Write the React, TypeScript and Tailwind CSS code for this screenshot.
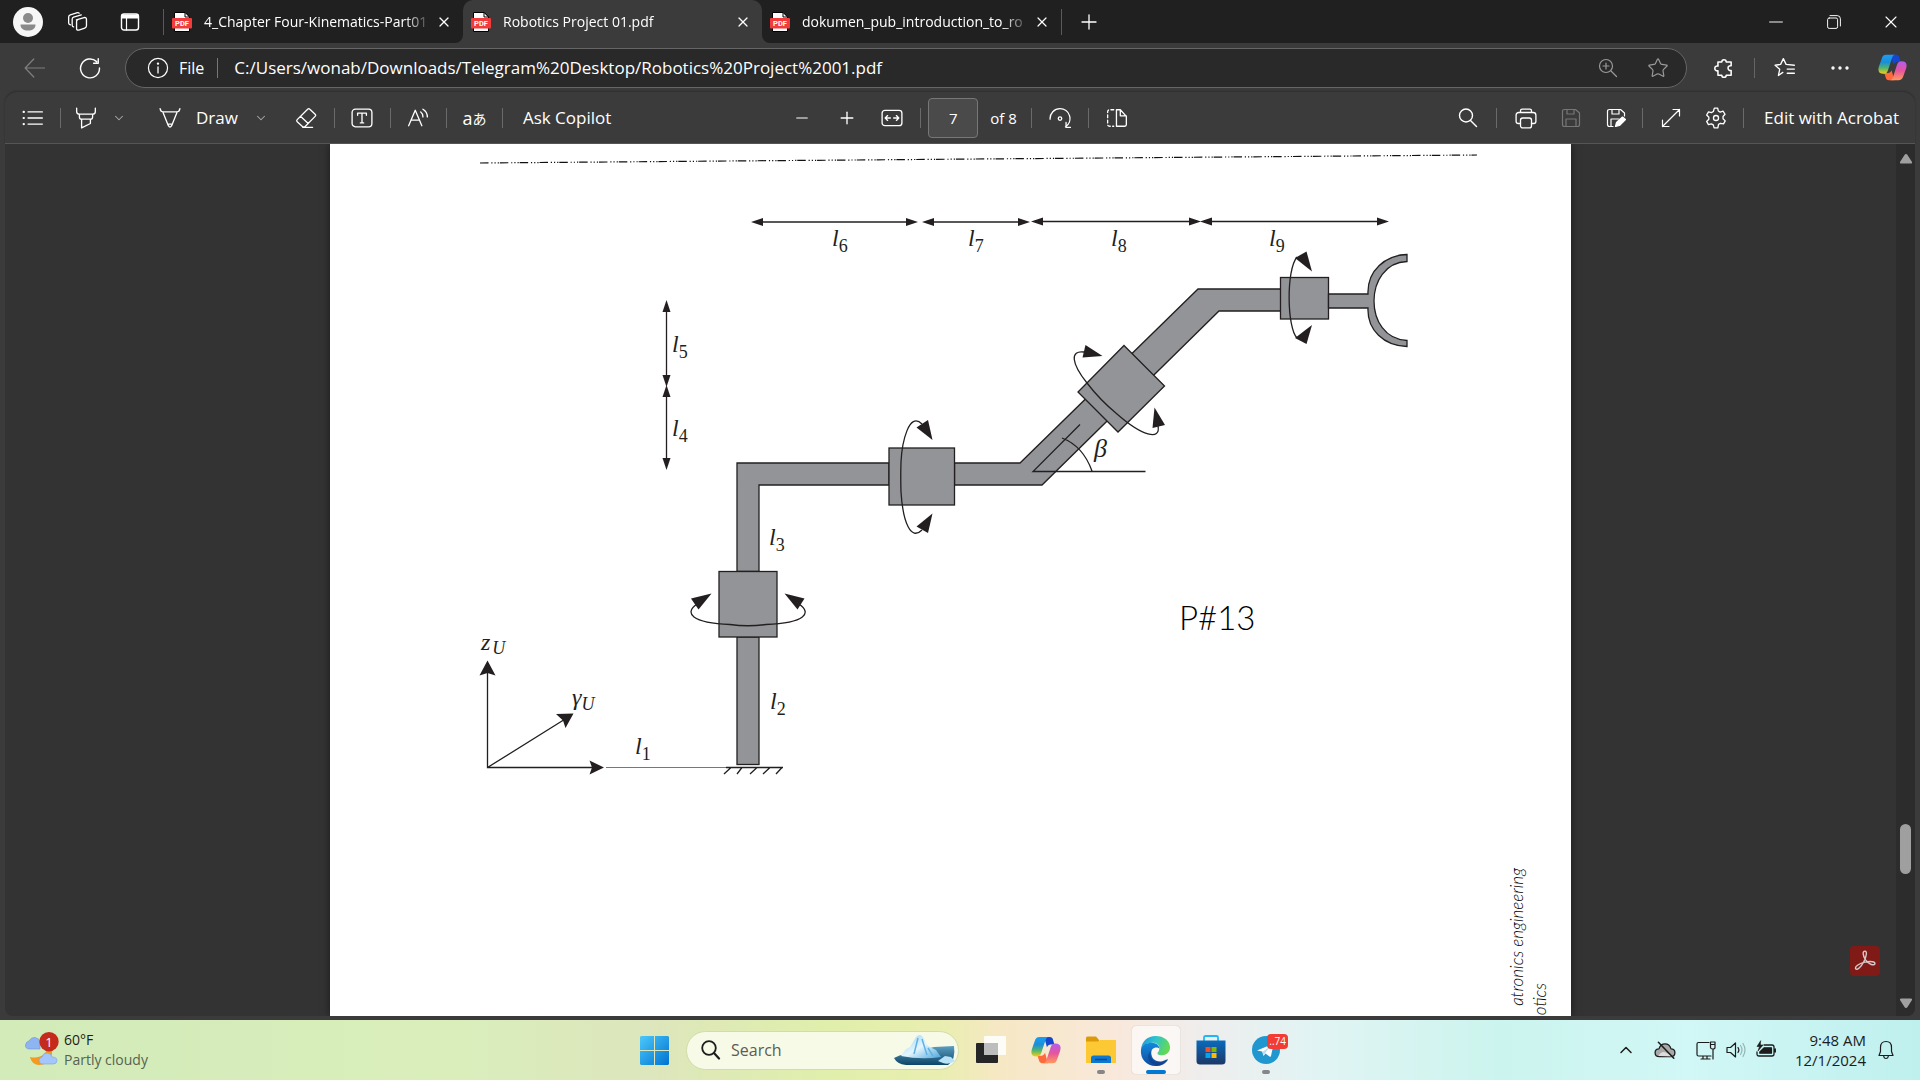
import React, { useState } from 'react';
import { ChevronDown, ChevronUp, Minus, Plus, Star, X } from 'lucide-react';

type GlyphProps = {
  className?: string;
  children: React.ReactNode;
};

function Glyph({ className = 'w-5 h-5', children }: GlyphProps) {
  return (
    <svg
      viewBox="0 0 20 20"
      className={`shrink-0 ${className}`}
      fill="none"
      stroke="currentColor"
      strokeWidth="1.2"
      strokeLinecap="round"
      strokeLinejoin="round"
      aria-hidden="true"
    >
      {children}
    </svg>
  );
}

type IconButtonProps = {
  label: string;
  className?: string;
  disabled?: boolean;
  onClick?: () => void;
  children: React.ReactNode;
};

function IconButton({ label, className = 'w-[45px]', disabled, onClick, children }: IconButtonProps) {
  return (
    <button
      type="button"
      aria-label={label}
      disabled={disabled}
      onClick={onClick}
      className={`flex h-8 shrink-0 items-center justify-center ${className}`}
    >
      {children}
    </button>
  );
}

function Divider({ className = 'h-5 bg-[#6a6a6a]' }: { className?: string }) {
  return <div className={`w-px shrink-0 ${className}`} />;
}

function PdfIcon() {
  return (
    <svg viewBox="0 0 20 20" className="h-5 w-5 shrink-0" aria-hidden="true">
      <path d="M2.500 0.500h11l4 4v15h-15z" fill="#fff" stroke="#000" />
      <path d="M13 0.500v4.500h4.500z" fill="#fff" stroke="#000" />
      <rect x="0" y="6" width="20" height="10.500" rx="1" fill="#f23b3b" />
      <text
        x="10"
        y="14"
        textAnchor="middle"
        fontSize="7.500"
        fontWeight="700"
        fill="#fff"
        fontFamily="Roboto, sans-serif"
      >
        PDF
      </text>
    </svg>
  );
}

function CopilotIcon({ id, className }: { id: string; className: string }) {
  return (
    <svg viewBox="0 0 32 32" className={className} aria-hidden="true">
      <defs>
        <linearGradient id={`${id}-a`} x1="0" y1="0" x2="0" y2="1">
          <stop offset="0" stopColor="#1a9df5" />
          <stop offset="0.400" stopColor="#1b8fd6" />
          <stop offset="0.700" stopColor="#56b56a" />
          <stop offset="1" stopColor="#f8cf12" />
        </linearGradient>
        <linearGradient id={`${id}-b`} x1="0" y1="0" x2="0" y2="1">
          <stop offset="0" stopColor="#b45cf0" />
          <stop offset="0.500" stopColor="#e6559c" />
          <stop offset="1" stopColor="#ff9a5c" />
        </linearGradient>
      </defs>
      <path d="M14 2h6c2 0 3 1 3.500 3l1.500 5h-4c-2 0-3 1-4 3z" fill="#1546d0" />
      <path d="M18 30h-6c-2 0-3-1-3.500-3L7 22h4c2 0 3-1 4-3z" fill="#ff6a3c" />
      <path
        d="M9 2h10c-2 0-3 1.500-4 5l-4 12c-.8 2.500-2 4-5 4-5 0-6.500-3-5-8l3-8.500C5 3.500 6 2 9 2z"
        fill={`url(#${id}-a)`}
      />
      <path
        d="M23 30H13c2 0 3-1.500 4-5l4-12c.8-2.500 2-4 5-4 5 0 6.500 3 5 8l-3 8.500C27 28.500 26 30 23 30z"
        fill={`url(#${id}-b)`}
      />
    </svg>
  );
}

const tabs = [
  { title: '4_Chapter Four-Kinematics-Part01', active: false },
  { title: 'Robotics Project 01.pdf', active: true },
  { title: 'dokumen_pub_introduction_to_ro', active: false },
];

function TabStrip() {
  return (
    <header className="flex h-[43px] items-center bg-[#202020] text-white">
      <button type="button" aria-label="Profile" className="ml-[13px] shrink-0">
        <svg viewBox="0 0 30 30" className="h-[30px] w-[30px]">
          <circle cx="15" cy="15" r="15" fill="#f7f7f7" />
          <circle cx="15" cy="11" r="5" fill="#8a8a8a" />
          <path d="M7.500 17.500h15c0 4-3 6-7.500 6s-7.500-2-7.500-6z" fill="#8a8a8a" />
        </svg>
      </button>
      <IconButton label="Workspaces" className="ml-3 w-[45px]">
        <Glyph className="h-[22px] w-[22px]">
          <path d="M8.500 8l7-2q2-.5 2.200 1.500v6q0 1.500-1.500 2l-5.500 1.800q-2 .5-2-1.500V9.500q0-1.200 1-1.500z" />
          <path d="M6 14.500q-1.300-.3-1.300-1.500V7.500Q4.700 6 6 5.500L13 3.500" />
          <path d="M3 12.500q-1.500-.3-1.500-1.500V5.500Q1.500 4 3 3.500l6.500-2q1-.2 1.500.5" />
        </Glyph>
      </IconButton>
      <IconButton label="Tab actions" className="ml-[7px] w-[45px]">
        <Glyph>
          <rect x="1.500" y="2" width="17" height="16" rx="2.500" strokeWidth="1.400" />
          <path d="M2 3h16v3H2z" fill="currentColor" />
          <path d="M6.500 6v12" />
        </Glyph>
      </IconButton>
      <Divider className="ml-[11px] h-[26px] bg-[#5a5a5a]" />
      <nav className="flex h-full min-w-0" aria-label="Tabs">
        {tabs.map((tab) => (
          <div
            key={tab.title}
            className={`relative flex w-[299px] min-w-0 items-center pr-[11px] pl-2 ${
              tab.active ? 'rounded-t-[10px] bg-[#3b3b3b]' : ''
            }`}
          >
            {tab.active && (
              <>
                <svg viewBox="0 0 8 8" className="absolute bottom-0 -left-2 h-2 w-2">
                  <path d="M8 0v8H0a8 8 0 0 0 8-8z" fill="#3b3b3b" />
                </svg>
                <svg viewBox="0 0 8 8" className="absolute -right-2 bottom-0 h-2 w-2">
                  <path d="M0 0v8h8a8 8 0 0 1-8-8z" fill="#3b3b3b" />
                </svg>
              </>
            )}
            <PdfIcon />
            <a
              href="#"
              className="ml-3 min-w-0 flex-1 text-sm whitespace-nowrap [mask-image:linear-gradient(to_right,black_88%,transparent)]"
            >
              {tab.title}
            </a>
            <button type="button" aria-label={`Close ${tab.title}`} className="ml-1 shrink-0">
              <X className="h-4 w-4" strokeWidth={1.8} />
            </button>
          </div>
        ))}
      </nav>
      <Divider className="h-[26px] bg-[#5a5a5a]" />
      <IconButton label="New tab" className="w-[54px]">
        <Plus className="h-6 w-6" strokeWidth={1.3} />
      </IconButton>
      <div className="ml-auto flex">
        <IconButton label="Minimize" className="w-[58px]">
          <Glyph className="h-4 w-4">
            <path d="M2 10h16" />
          </Glyph>
        </IconButton>
        <IconButton label="Restore" className="w-[57px]">
          <Glyph className="h-4 w-4">
            <rect x="2" y="5" width="12.500" height="13" rx="2" />
            <path d="M5 2h9q4 0 4 4v9" />
          </Glyph>
        </IconButton>
        <IconButton label="Close" className="w-[58px]">
          <X className="h-5 w-5" strokeWidth={1.3} />
        </IconButton>
      </div>
    </header>
  );
}

function AddressBar() {
  return (
    <div className="flex h-[49px] items-center bg-[#3b3b3b] text-white">
      <IconButton label="Back" className="ml-2 w-[54px] text-[#7f7f7f]" disabled>
        <Glyph className="h-6 w-6">
          <path d="M18 10H2M9 2.500L1.800 10 9 17.500" strokeWidth="1" />
        </Glyph>
      </IconButton>
      <IconButton label="Refresh" className="w-[55px]">
        <Glyph className="h-[22px] w-[22px]">
          <path d="M16 4.200A8.600 8.600 0 1 0 18.600 10M17.500 1.500v4.200h-4.200" strokeWidth="1.300" />
        </Glyph>
      </IconButton>
      <div className="ml-2 flex h-10 min-w-0 flex-1 items-center rounded-full border border-[#666] bg-[#292929] pr-1.5 pl-[21px]">
        <Glyph className="h-[22px] w-[22px]">
          <circle cx="10" cy="10" r="8.700" strokeWidth="1.100" />
          <path d="M10 9v5.500" />
          <circle cx="10" cy="6" r=".5" fill="currentColor" />
        </Glyph>
        <span className="ml-[10px] text-base">File</span>
        <Divider className="ml-[13px] h-5 bg-[#777]" />
        <input
          aria-label="Address"
          defaultValue="C:/Users/wonab/Downloads/Telegram%20Desktop/Robotics%20Project%2001.pdf"
          className="ml-4 min-w-0 flex-1 bg-transparent text-[17px] outline-none"
        />
        <IconButton label="Zoom" className="w-14 text-[#9a9a9a]">
          <Glyph>
            <circle cx="8" cy="8" r="6.500" />
            <path d="M13 13l5.500 5.500M5 8h6M8 5v6" />
          </Glyph>
        </IconButton>
        <IconButton label="Add to favorites" className="w-11 text-[#9a9a9a]">
          <Star className="h-[22px] w-[22px]" strokeWidth={1.3} />
        </IconButton>
      </div>
      <IconButton label="Extensions" className="ml-3.5 w-[46px]">
        <Glyph className="h-[22px] w-[22px]">
          <path
            d="M4.500 4.500H8a2 2 0 1 1 4 0h4.500V8a2.200 2.200 0 1 0 0 4.200v4.300H12a2 2 0 1 1-4 0H4.500v-4a2.200 2.200 0 1 1 0-4.200z"
            strokeWidth="1.400"
          />
        </Glyph>
      </IconButton>
      <Divider className="ml-[7px] h-5 bg-[#666]" />
      <IconButton label="Favorites" className="ml-1.5 w-[48px]">
        <Glyph className="h-[22px] w-[22px]">
          <path d="M8 14l-4 2.800 1.200-5.600L1 7.500l5-.8L8.500 1.500 11 6.700l7.500.8M12 11h6.500M12 14.800h6.500" />
        </Glyph>
      </IconButton>
      <IconButton label="Settings and more" className="ml-[7px] w-[48px]">
        <Glyph>
          <circle cx="3" cy="10" r="1.100" fill="currentColor" />
          <circle cx="10" cy="10" r="1.100" fill="currentColor" />
          <circle cx="17" cy="10" r="1.100" fill="currentColor" />
        </Glyph>
      </IconButton>
      <IconButton label="Copilot" className="w-14">
        <CopilotIcon id="bar" className="h-[29px] w-[29px]" />
      </IconButton>
    </div>
  );
}

function PdfToolbar() {
  const [page, setPage] = useState('7');

  return (
    <div className="flex h-[52px] items-center rounded-t-xl border-b border-[#555] bg-[#3b3b3b] pt-px text-white shadow-[0_-1px_2px_rgba(0,0,0,0.25)]">
      <div className="flex flex-1 items-center">
        <IconButton label="Contents" className="w-[55px]">
          <Glyph className="h-[22px] w-[22px]">
            <path d="M5.500 4.500h13M5.500 10h13M5.500 15.500h13" />
            <path d="M1.500 4.500h.2M1.500 10h.2M1.500 15.500h.2" strokeWidth="2" />
          </Glyph>
        </IconButton>
        <Divider />
        <IconButton label="Highlight" className="ml-[3px] w-[44px]">
          <Glyph className="h-[22px] w-[22px]">
            <path d="M1.500 1v3q0 2.500 2.500 2.500h12q2.500 0 2.500-2.500V1M4 6.500V9q0 2 2 2h8q2 0 2-2V6.500M6 11v8l8-4v-4" />
          </Glyph>
        </IconButton>
        <IconButton label="Highlight options" className="w-[22px] text-[#aaa]">
          <ChevronDown className="h-3.5 w-3.5" strokeWidth={1.8} />
        </IconButton>
        <button type="button" className="ml-[29px] flex h-8 items-center gap-[15px] text-[17px]">
          <Glyph className="h-[22px] w-[22px]">
            <path d="M1 1.500q.5 3 3 3h12q2.500 0 3-3M3.500 4.500L8.500 17q1.500 2.500 3 0l5-12.500M8 15.500h4" />
          </Glyph>
          Draw
        </button>
        <IconButton label="Draw options" className="ml-3 w-[22px] text-[#aaa]">
          <ChevronDown className="h-3.5 w-3.5" strokeWidth={1.8} />
        </IconButton>
        <IconButton label="Erase" className="ml-3 w-[44px]">
          <Glyph className="h-[22px] w-[22px]">
            <path d="M2 11.500L11.500 2q1-1 2 0l4.800 4.500q1 1 0 2L9 18H7l-5-4.500q-1-1 0-2zM5 8.500l7 6.500M7 18.500h9" />
          </Glyph>
        </IconButton>
        <Divider className="ml-1.5 h-5 bg-[#6a6a6a]" />
        <IconButton label="Add text" className="w-[55px]">
          <Glyph className="h-[22px] w-[22px]">
            <rect x="1" y="2" width="18" height="16" rx="3" />
            <path d="M6 7.500V5.500h8v2M10 5.500v9M8.500 14.500h3" />
          </Glyph>
        </IconButton>
        <Divider />
        <IconButton label="Read aloud" className="w-[55px]">
          <Glyph className="h-[22px] w-[22px]">
            <path d="M1.500 17L7.500 3l6 14M4 12h7M12.500 4.500q2 1.500 2 4.500M14.500 2q4 2.500 4 7" />
          </Glyph>
        </IconButton>
        <Divider />
        <button
          type="button"
          aria-label="Translate"
          className="flex h-8 w-[55px] shrink-0 items-center justify-center text-lg"
        >
          a<span className="font-['Noto_Sans_CJK_JP',sans-serif] text-sm">あ</span>
        </button>
        <Divider />
        <button type="button" className="ml-5 text-[17px] whitespace-nowrap">
          Ask Copilot
        </button>
      </div>

      <div className="flex items-center pl-1">
        <IconButton label="Zoom out">
          <Minus className="h-[18px] w-[18px]" strokeWidth={1.6} />
        </IconButton>
        <IconButton label="Zoom in">
          <Plus className="h-5 w-5" strokeWidth={1.6} />
        </IconButton>
        <IconButton label="Fit to width">
          <Glyph className="h-[22px] w-[22px]">
            <rect x="1" y="3" width="18" height="14" rx="2.500" />
            <path d="M8.500 10H4M6 7.800L3.800 10 6 12.200M11.500 10H16M14 7.800l2.200 2.200-2.200 2.200" />
          </Glyph>
        </IconButton>
        <Divider className="ml-1.5 h-5 bg-[#6a6a6a]" />
        <input
          aria-label="Page number"
          value={page}
          onChange={(event) => setPage(event.target.value)}
          className="ml-[7px] h-10 w-[50px] rounded-sm border border-[#777] bg-[#4a4a4a] text-center text-[15px] outline-none"
        />
        <span className="ml-3 text-[15px] whitespace-nowrap">of 8</span>
        <Divider className="ml-3.5 h-5 bg-[#6a6a6a]" />
        <IconButton label="Rotate" className="w-[56px]">
          <Glyph className="h-[22px] w-[22px]">
            <path d="M1 11A9 9 0 0 1 10 1.500a9 9 0 0 1 5 16.500M15.500 14v4.500h4" />
            <circle cx="10" cy="10.500" r="1.600" />
          </Glyph>
        </IconButton>
        <Divider />
        <IconButton label="Page view" className="w-[56px]">
          <Glyph className="h-[22px] w-[22px]">
            <path d="M9.500 2.500v15H17q1.500 0 1.500-1.500V8.500L13 2.500zM13 2.500v5.500h5.500" />
            <path d="M7 2.500H3.500q-2 0-2 2V16q0 1.500 2 1.500H7" strokeDasharray="2.500 2.200" />
          </Glyph>
        </IconButton>
      </div>

      <div className="flex flex-1 items-center justify-end">
        <IconButton label="Find" className="w-[56px]">
          <Glyph>
            <circle cx="8" cy="7.500" r="6.500" strokeWidth="1.400" />
            <path d="M12.500 12.500l6 6" strokeWidth="1.400" />
          </Glyph>
        </IconButton>
        <Divider />
        <IconButton label="Print" className="ml-1.5 w-[45px]">
          <Glyph className="h-[22px] w-[22px]">
            <path d="M5 5V3.500Q5 2 6.500 2h7Q15 2 15 3.500V5M5 15H3q-2 0-2-2V7.500Q1 5 3.500 5h13Q19 5 19 7.500V13q0 2-2 2h-2" />
            <rect x="5" y="10" width="10" height="9" rx="2" />
          </Glyph>
        </IconButton>
        <IconButton label="Save" className="w-[45px] text-[#777]" disabled>
          <Glyph>
            <path d="M3.500 1.500h11l4 3.500v11.500q0 2-2 2h-13q-2 0-2-2v-13q0-2 2-2zM6 1.500V6h7V1.500M5 18.500V11h10v7.500" />
          </Glyph>
        </IconButton>
        <IconButton label="Save as" className="w-[45px]">
          <Glyph>
            <path d="M7 18.500H3.500q-2 0-2-2v-13q0-2 2-2h11l4 3.500v3M6 1.500V6h7V1.500M5 18.500V11h8" />
            <path d="M9.500 18.500l1-4 6-5.500 3 2.500-6 6z" fill="currentColor" />
          </Glyph>
        </IconButton>
        <Divider className="ml-1 h-5 bg-[#6a6a6a]" />
        <IconButton label="Full screen" className="w-[56px]">
          <Glyph>
            <path d="M12 1.500h6.500V8M18.500 1.500l-17 17M1.500 12v6.500H8" />
          </Glyph>
        </IconButton>
        <IconButton label="Settings" className="w-[34px]">
          <Glyph className="h-[22px] w-[22px]">
            <path d="M8.500 1h3l.6 2.600 1.700 1 2.600-.8 1.800 2.800-1.800 2v2l2 2-1.600 2.800-2.700-.6-1.800 1L11.700 19H8.300l-.8-2.700-1.700-1-2.700.7-1.600-2.900 2-2V9.300l-2-2 1.700-2.900 2.600.7 1.800-1z" />
            <circle cx="10" cy="10" r="2.300" />
          </Glyph>
        </IconButton>
        <Divider className="ml-[10px] h-5 bg-[#6a6a6a]" />
        <button type="button" className="mr-4 ml-5 text-[17px] whitespace-nowrap">
          Edit with Acrobat
        </button>
      </div>
    </div>
  );
}

type ArrowProps = { x1: number; y1: number; x2: number; y2: number };

// Dimension line with a filled head at both ends
function DimensionArrow({ x1, y1, x2, y2 }: ArrowProps) {
  const length = Math.hypot(x2 - x1, y2 - y1);
  const angle = (Math.atan2(y2 - y1, x2 - x1) * 180) / Math.PI;
  return (
    <g transform={`translate(${x1} ${y1}) rotate(${angle})`}>
      <path d={`M4 0H${length - 4}`} strokeWidth="1.300" />
      <path d="M0 0l12-4v8z" fill="#231f20" stroke="none" />
      <path d={`M${length} 0l-12-4v8z`} fill="#231f20" stroke="none" />
    </g>
  );
}

const dimensions = [
  { x1: 751, y1: 222, x2: 918, y2: 222 },
  { x1: 922, y1: 222, x2: 1030, y2: 222 },
  { x1: 1031, y1: 221.5, x2: 1201, y2: 221.5 },
  { x1: 1200, y1: 221.5, x2: 1389, y2: 221.5 },
  { x1: 666.5, y1: 300, x2: 666.5, y2: 387 },
  { x1: 666.5, y1: 385, x2: 666.5, y2: 470 },
];

const labels = [
  { base: 'l', sub: '1', x: 635, y: 754 },
  { base: 'l', sub: '2', x: 770, y: 709 },
  { base: 'l', sub: '3', x: 769, y: 545 },
  { base: 'l', sub: '4', x: 672, y: 436 },
  { base: 'l', sub: '5', x: 672, y: 352 },
  { base: 'l', sub: '6', x: 832, y: 246 },
  { base: 'l', sub: '7', x: 968, y: 246 },
  { base: 'l', sub: '8', x: 1111, y: 246 },
  { base: 'l', sub: '9', x: 1269, y: 246 },
];

function RobotDiagram() {
  return (
    <svg
      viewBox="330 144 1241 872"
      className="block w-full font-['Liberation_Serif',serif]"
      fill="none"
      stroke="#231f20"
      strokeWidth="1.300"
      role="img"
      aria-label="Robot arm with joint offsets"
    >
      <path
        d="M480 163L1477 155"
        stroke="#111"
        strokeWidth="1.200"
        strokeDasharray="8.500 2.800 1.200 2 1.200 2 1.200 0.930"
      />

      {dimensions.map((item) => (
        <DimensionArrow key={`${item.x1}-${item.y1}`} {...item} />
      ))}

      <g fill="#929497">
        <path d="M737 571.500V463h152v22H759v86.500z" />
        <rect x="737" y="637" width="22" height="127.500" />
        <rect x="719" y="571.500" width="58" height="65.500" />
        <path d="M954.500 463H1020L1198 289H1281V311H1219L1042 485H954.500z" />
        <rect x="889" y="448" width="65.500" height="57" />
        <path d="M1124 345.500L1164.500 386 1118 432 1078 392z" />
        <rect x="1280.500" y="277.500" width="48" height="41.500" />
        <path d="M1328.500 294H1368C1367 270 1386 255 1407 254.500V261.500C1363 263 1363 339 1407 340.500V346.500C1384 346 1367 330 1368 308H1328.500z" />
      </g>

      {/* rotation arcs */}
      <path d="M697 604C684 613 691 623 730 624.500Q748 627 766 624.500C806 623 812 613 799 604" />
      <path d="M922 424C909 411 902 442 901 462Q900.500 477 901 492C903 523 911 541 922 530" />
      <path d="M1297 257C1286 270 1287 328 1297 338" />
      <path d="M1084 352C1070 350 1071 363 1087 383Q1100 400 1117 414C1142 436 1161 441 1158 426" />
      <g fill="#231f20" stroke="none">
        <path d="M711.500 593.500L691 598.500 698.500 609.500z" />
        <path d="M784.500 593.500L804.500 598.500 797.500 609.500z" />
        <path d="M932.500 440L916.500 427.500 928 420z" />
        <path d="M932.500 513.500L916.500 526.500 928 533z" />
        <path d="M1312 271.500L1295 258 1306.500 251.500z" />
        <path d="M1312 325L1295 338 1306.500 344z" />
        <path d="M1102.500 356L1082.500 357.500 1085.500 345z" />
        <path d="M1154.500 407.500L1165 425 1152.500 428z" />
      </g>

      {/* beta angle */}
      <path d="M1145.500 471.500H1033L1080 424.500M1062 438Q1083 446 1092 471" />

      {/* universe frame */}
      <path d="M487.500 670V767.500H594M487.500 767.500L566 718.500" />
      <path d="M606 767.500H726" stroke="#777" strokeWidth="1" />
      <path d="M726 767.500H783M731 767.500L724 774M742 767.500L737 774M757 767.500L750 774M770 767.500L763 774M782 767.500L776 774" />
      <g fill="#231f20" stroke="none">
        <path d="M487.500 660.500L495.500 675.500 487.500 673 479.500 675.500z" />
        <path d="M604 767.500L589.500 774.500 592 767.500 589.500 760.500z" />
        <path d="M573.500 713.500L565.500 728 563 720.500 556 714z" />
      </g>

      <g fill="#231f20" stroke="none">
        {labels.map((label) => (
          <text key={label.sub} x={label.x} y={label.y} fontSize="24" fontStyle="italic">
            {label.base}
            <tspan dy="6" fontSize="18" fontStyle="normal">
              {label.sub}
            </tspan>
          </text>
        ))}
        <text x="481" y="650" fontSize="24" fontStyle="italic">
          z
          <tspan dx="2" dy="4" fontSize="18">
            U
          </tspan>
        </text>
        <text x="572" y="705" fontSize="24" fontStyle="italic">
          γ
          <tspan dy="5" fontSize="18">
            U
          </tspan>
        </text>
        <text x="1094" y="457" fontSize="26" fontStyle="italic">
          β
        </text>
      </g>

      <g fill="#000" stroke="none" className="font-['Lato',sans-serif] font-light">
        <text x="1179" y="630" fontSize="33">
          P#13
        </text>
        <g fontSize="17" fontStyle="italic" textAnchor="end">
          <text transform="translate(1523 868) rotate(-90)">atronics engineering</text>
          <text transform="translate(1546 983) rotate(-90)">otics</text>
        </g>
      </g>
    </svg>
  );
}

function Viewer() {
  return (
    <main className="relative flex flex-1 overflow-hidden rounded-b-lg bg-[#333]">
      <div className="flex min-w-0 flex-1 justify-center">
        <div className="w-full max-w-[1241px] bg-white shadow-[0_0_8px_rgba(0,0,0,0.5)]">
          <RobotDiagram />
        </div>
      </div>
      <div className="relative flex w-[19px] shrink-0 flex-col items-center justify-between bg-[#2c2c2c] pt-[9px] pb-[7px]">
        <svg viewBox="0 0 14 12" className="h-3 w-3.5" fill="#a0a0a0">
          <path d="M7 1q1 0 1.500 1l4.500 7q.5 1.500-1 1.500H2Q.5 10.500 1 9l4.500-7Q6 1 7 1z" />
        </svg>
        <div className="absolute top-[78%] h-[50px] w-[11px] rounded-full bg-[#9f9f9f]" />
        <svg viewBox="0 0 14 12" className="h-3 w-3.5 rotate-180" fill="#a0a0a0">
          <path d="M7 1q1 0 1.500 1l4.500 7q.5 1.500-1 1.500H2Q.5 10.500 1 9l4.500-7Q6 1 7 1z" />
        </svg>
      </div>
      <button
        type="button"
        aria-label="Open in Acrobat"
        className="absolute right-[35px] bottom-10 flex h-[30px] w-[30px] items-center justify-center rounded bg-[#7f1a17] text-[#d8c8c8]"
      >
        <Glyph className="h-[22px] w-[22px]">
          <path
            d="M10 1C7.500 1 8 5 10.500 9c3 4.500 8 5.500 8.500 3.500s-4-2.500-9-1.500-9.500 4-8.500 6 5-1.500 7.500-6.500S12 1 10 1z"
            strokeWidth="1.300"
          />
        </Glyph>
      </button>
    </main>
  );
}

function WeatherIcon() {
  return (
    <svg viewBox="0 0 34 36" className="h-9 w-[34px] shrink-0" aria-hidden="true">
      <path d="M25 13c5 8 1 20-11 20-4 0-8-3-9-8 9 2 16-2 18-10z" fill="#f59a1c" />
      <path d="M4 17q-4-.5-3.500-4T4 9q2-4 6-3.500t5 4.500v7z" fill="#8fb4f2" stroke="#6d93dc" strokeWidth=".6" />
      <path d="M17 32q-3-.5-3-3.500t3-3.500q1-4 5-4t5 4q5 0 5 3.500T28 32z" fill="#a5c6fa" stroke="#7ba0e6" strokeWidth=".6" />
      <circle cx="24" cy="9.700" r="9.700" fill="#c42b1c" />
      <text x="24" y="14.500" textAnchor="middle" fontSize="13" fill="#fff">
        1
      </text>
    </svg>
  );
}

function BergIcon() {
  return (
    <svg viewBox="0 0 62 32" className="h-9 w-[62px] shrink-0" aria-hidden="true">
      <defs>
        <linearGradient id="berg-ice" x1="0" y1="0" x2="1" y2="1">
          <stop offset="0" stopColor="#8fd0f5" />
          <stop offset="0.500" stopColor="#e4f6ff" />
          <stop offset="1" stopColor="#4aa3d8" />
        </linearGradient>
        <linearGradient id="berg-sea" x1="0" y1="0" x2="0" y2="1">
          <stop offset="0" stopColor="#5b9fc0" />
          <stop offset="1" stopColor="#0d4568" />
        </linearGradient>
      </defs>
      <path d="M40 13l20-1q2 14-6 19H12Q3 30 0 24q5-3 12-4z" fill="url(#berg-sea)" />
      <path d="M7 22l5-7 4-2 6-10q4-4 7 0l5 9 8 4 5 7q-20 3-40-1z" fill="url(#berg-ice)" />
      <path d="M24 4l-4 16M28 5l5 16M34 14l5 8" stroke="#5fb2e4" strokeWidth="1.500" fill="none" />
      <path d="M44 27l7-5 6 1 4 4q-6 4-12 2z" fill="#b8e2f8" />
    </svg>
  );
}

type TaskbarAppProps = {
  label: string;
  active?: boolean;
  running?: boolean;
  children: React.ReactNode;
};

function TaskbarApp({ label, active, running, children }: TaskbarAppProps) {
  return (
    <button
      type="button"
      aria-label={label}
      className="relative flex h-[60px] w-[55px] shrink-0 items-center justify-center"
    >
      <span
        className={`flex h-12 w-12 items-center justify-center rounded ${
          active ? 'bg-white/60 shadow-[0_0_1px_rgba(0,0,0,0.3)]' : ''
        }`}
      >
        {children}
      </span>
      {active && <span className="absolute bottom-1.5 h-1 w-5 rounded-full bg-[#0078d4]" />}
      {running && <span className="absolute bottom-1.5 h-1 w-2 rounded-full bg-[#868686]" />}
    </button>
  );
}

function Taskbar() {
  return (
    <footer className="flex h-[60px] items-center bg-[linear-gradient(90deg,#d2ebb9_0%,#d9eebb_23%,#dde6bc_34%,#e0efab_43%,#e9eeb0_49%,#f6e8c4_52%,#f9e8db_58%,#eeeeee_63%,#e0f4f4_69%,#ccf4ee_78%,#d1f7f6_88%,#bff0ee_100%)] text-[#1c1c1c]">
      <div className="flex flex-1 items-center">
        <button type="button" className="ml-[25px] flex items-center gap-[5px] text-left text-sm leading-5">
          <WeatherIcon />
          <span className="flex flex-col">
            <span>60°F</span>
            <span className="text-[#566350]">Partly cloudy</span>
          </span>
        </button>
      </div>

      <div className="flex items-center">
        <TaskbarApp label="Start">
          <svg viewBox="0 0 29 29" className="h-[29px] w-[29px]">
            <defs>
              <linearGradient id="start" x1="0" y1="0" x2="1" y2="1">
                <stop offset="0" stopColor="#4cc8fb" />
                <stop offset="1" stopColor="#0073d0" />
              </linearGradient>
            </defs>
            <path d="M1 0h13v14H0V1zM15 0h13l1 1v13H15zM0 15h14v14H1l-1-1zM15 15h14v13l-1 1H15z" fill="url(#start)" />
          </svg>
        </TaskbarApp>
        <label className="mx-1 flex h-[39px] w-[273px] items-center rounded-full border border-[#d3dca9] bg-[#f7fae7] pr-0.5 pl-3.5">
          <Glyph>
            <circle cx="8" cy="8" r="6.800" strokeWidth="1.800" />
            <path d="M13 13l5 5.500" strokeWidth="2.200" />
          </Glyph>
          <input
            aria-label="Search"
            placeholder="Search"
            className="ml-2.5 w-0 min-w-0 flex-1 bg-transparent text-base outline-none placeholder:text-[#5c5c56]"
          />
          <BergIcon />
        </label>
        <TaskbarApp label="Task view">
          <svg viewBox="0 0 30 30" className="h-[30px] w-[30px]">
            <rect x="0" y="8" width="22" height="20" rx="1" fill="#262626" />
            <rect x="8" y="1" width="22" height="19" rx="1" fill="#fff" opacity="0.850" />
            <rect x="8" y="8" width="14" height="12" fill="#bdbdbd" />
          </svg>
        </TaskbarApp>
        <TaskbarApp label="Copilot">
          <CopilotIcon id="task" className="h-[30px] w-[30px]" />
        </TaskbarApp>
        <TaskbarApp label="File Explorer" running>
          <svg viewBox="0 0 30 28" className="h-7 w-[30px]">
            <path d="M0 2q0-1.500 1.500-1.500H10l3 3.500v4H0z" fill="#dc9a08" />
            <path d="M0 5.500h12l2-1.500h16v23H0z" fill="#fcc934" />
            <path d="M5 27v-5q0-2.500 2.500-2.500h15Q25 19.500 25 22v5z" fill="#0f78d0" />
            <path d="M9 23.500h12" stroke="#064a94" strokeWidth="1.500" />
          </svg>
        </TaskbarApp>
        <TaskbarApp label="Microsoft Edge" active>
          <svg viewBox="0 0 32 32" className="h-[31px] w-[31px]">
            <defs>
              <linearGradient id="edge-top" x1="0" y1="0" x2="1" y2="0.300">
                <stop offset="0" stopColor="#1b92dc" />
                <stop offset="0.500" stopColor="#2fc2cf" />
                <stop offset="1" stopColor="#62d957" />
              </linearGradient>
              <linearGradient id="edge-low" x1="0" y1="0" x2="0" y2="1">
                <stop offset="0" stopColor="#1389dc" />
                <stop offset="1" stopColor="#114a9e" />
              </linearGradient>
            </defs>
            <path d="M1 15C2 6 8 1 16 1c9 0 15 5 15 12 0 5-4 8-8 8-3 0-5-1-5-2s2-2 2-5c0-4-3-6-7-6C7 8 2 11 1 15z" fill="url(#edge-top)" />
            <path d="M1 15c1-5 6-7 11-7 5 0 8 3 8 6-1-1-3-1-4-1-4 1-5 4-4 8 1 5 6 7 11 6 3-1 5-2 6-2-3 5-8 7-13 7C7 32 0 25 1 15z" fill="url(#edge-low)" />
            <path d="M12 16c-3 5 0 11 6 12 4 .5 8-1 11-3-4 8-13 8-17 4-5-4-5-10 0-13z" fill="#0f3c86" opacity="0.600" />
          </svg>
        </TaskbarApp>
        <TaskbarApp label="Microsoft Store">
          <svg viewBox="0 0 30 30" className="h-[30px] w-[30px]">
            <defs>
              <linearGradient id="store" x1="0" y1="0" x2="0" y2="1">
                <stop offset="0" stopColor="#0a6bbd" />
                <stop offset="1" stopColor="#1c3766" />
              </linearGradient>
            </defs>
            <path d="M8 6V2.500Q8 1 9.500 1h11Q22 1 22 2.500V6" fill="none" stroke="#1fb8f2" strokeWidth="1.800" />
            <path d="M.5 5.500h29V26q0 3.500-3.500 3.500H4Q.5 29.500.5 26z" fill="url(#store)" />
            <path d="M9.500 12h5v5h-5z" fill="#f25022" />
            <path d="M15.500 12h5v5h-5z" fill="#7fba00" />
            <path d="M9.500 18h5v5h-5z" fill="#00a4ef" />
            <path d="M15.500 18h5v5h-5z" fill="#ffb900" />
          </svg>
        </TaskbarApp>
        <TaskbarApp label="Telegram" running>
          <svg viewBox="0 0 28 28" className="h-7 w-7">
            <circle cx="14" cy="14" r="14" fill="#2197cf" />
            <path d="M5 14.500L20.500 8q1-.3.800 1L19 20q-.4 1.200-1.500.5L13.500 17.500l-2 2.500-1.300-4.500z" fill="#fff" />
            <path d="M10.500 16l8-6-5 6.500-2 2.500z" fill="#b5dcf0" />
          </svg>
          <span className="absolute top-[14px] right-[5px] rounded bg-[#f23c34] px-0.5 text-[10px] leading-[15px] text-white">
            ..74
          </span>
        </TaskbarApp>
      </div>

      <div className="flex flex-1 items-center justify-end">
        <IconButton label="Show hidden icons" className="w-[38px]">
          <ChevronUp className="h-5 w-5" strokeWidth={1.8} />
        </IconButton>
        <IconButton label="OneDrive" className="w-10">
          <Glyph className="h-[22px] w-[22px]">
            <path d="M5 16Q1 16 1 12.500T4.500 9Q6 4.500 10 4.500T15.500 9Q19 9 19 12.500T15 16z" fill="#a9a9a9" />
            <path d="M4 15.500q3-5 7-3l6 3.300z" fill="#ddd" stroke="none" />
            <path d="M4 3l14 14.500" strokeWidth="1.400" />
          </Glyph>
        </IconButton>
        <button type="button" aria-label="Network, volume and battery" className="flex h-8 w-[102px] shrink-0 items-center justify-center gap-2.5">
          <Glyph>
            <path d="M13 2.500H2.500Q1 2.500 1 4v10.500Q1 16 2.500 16H15M7 16v3M11 16v3M5 19h9" />
            <path d="M14.500 2h4.500v5.500q0 1.500-2.200 1.500t-2.300-1.500zM14.500 4.500H19M17 9v10" />
          </Glyph>
          <Glyph>
            <path d="M1 7.500h3.500L9.500 3v14l-5-4.500H1zM12 7.500q1.800 2.500 0 5" />
            <path d="M14.500 5.500q3 4.500 0 9M17 3.500q4 6.500 0 13" stroke="#93b5b3" />
          </Glyph>
          <Glyph>
            <path d="M8 5h8q2 0 2 2v7q0 2-2 2H3q-2 0-2-2v-2M19.300 9v3" strokeWidth="1.300" />
            <path d="M8 7.800h7.500v5.400H3.800V12z" fill="currentColor" />
            <path d="M4.500 1L1 6.500h2.500L2 11l5-6H4.500z" fill="currentColor" strokeWidth=".6" />
          </Glyph>
        </button>
        <button type="button" className="ml-2 flex items-center gap-2.5 text-right text-[15px] leading-5">
          <span className="flex flex-col">
            <span>9:48 AM</span>
            <span>12/1/2024</span>
          </span>
          <Glyph>
            <path d="M10 1.500q-5.500 0-5.500 6v4L3 15.500h14l-1.500-4v-4q0-6-5.500-6zM7.500 15.500q.5 3 2.500 3t2.500-3" />
          </Glyph>
        </button>
        <div className="w-6 shrink-0" />
      </div>
    </footer>
  );
}

export default function App() {
  return (
    <div className="flex min-h-screen flex-col bg-[#3b3b3b] font-['Open_Sans',sans-serif]">
      <TabStrip />
      <AddressBar />
      <div className="flex flex-1 flex-col px-[5px] pb-1">
        <PdfToolbar />
        <Viewer />
      </div>
      <Taskbar />
    </div>
  );
}
